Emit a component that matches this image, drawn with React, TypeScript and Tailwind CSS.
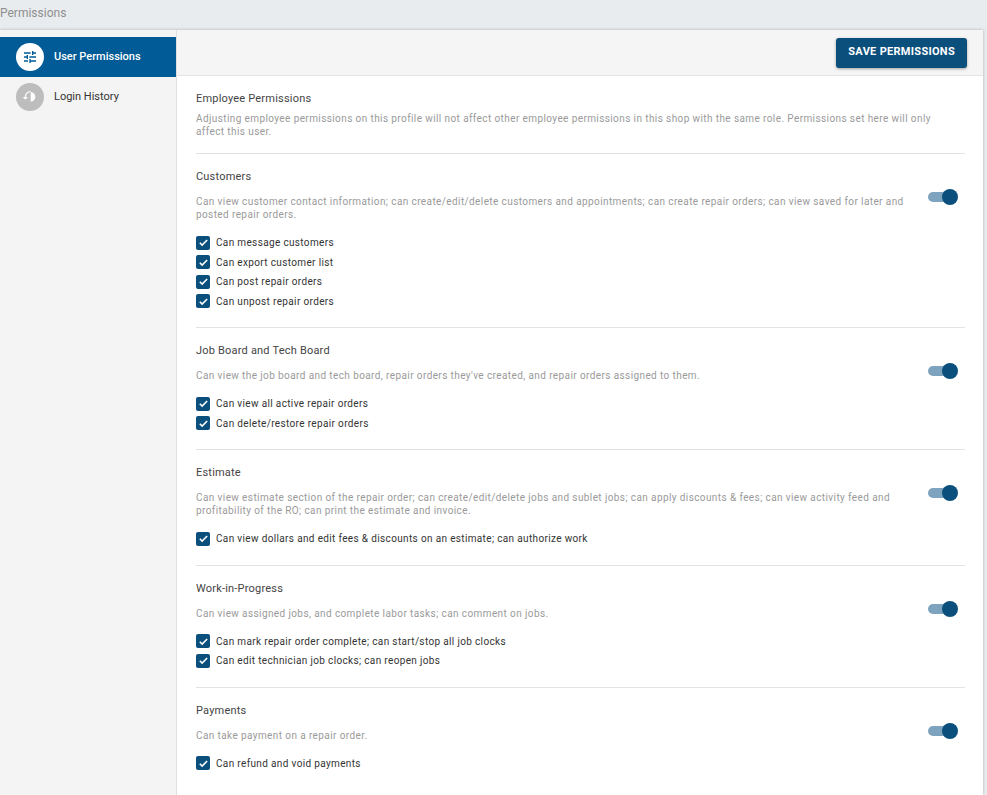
import React from "react";

const Check = ({ label }: { label: string }) => (
  <div className="flex items-center h-[19.5px]">
    <div className="w-[14px] h-[14px] rounded-[2px] bg-[#0b4f7c] flex items-center justify-center">
      <svg width="11" height="11" viewBox="0 0 24 24" fill="none" stroke="white" strokeWidth="3.5"><path d="M4 12.5l5 5L20 6.5" /></svg>
    </div>
    <span className="ml-[6px] text-[10px] text-[#333] tracking-[0.35px]">{label}</span>
  </div>
);

const Toggle = () => (
  <div className="relative w-[30px] h-[16px] shrink-0 mr-[7px]">
    <div className="absolute left-0 top-[3px] w-[26px] h-[10px] rounded-full bg-[#7ea3be]" />
    <div className="absolute right-0 top-0 w-[16px] h-[16px] rounded-full bg-[#0b4f7c]" />
  </div>
);

const Section = ({ title, desc, checks, last }: { title: string; desc: string; checks: string[]; last?: boolean }) => (
  <div className={`pt-[16px] ${last ? "" : "border-b border-[#e3e3e3] pb-[16px]"}`}>
    <div className="text-[11px] text-[#444] leading-[14px] tracking-[0.2px]">{title}</div>
    <div className="flex items-start mt-[11px]">
      <div className="flex-1 text-[10px] text-[#9a9a9a] leading-[13px] pr-[10px] tracking-[0.4px]">{desc}</div>
      <div className="-mt-[6px]"><Toggle /></div>
    </div>
    <div className="mt-[12px]">
      {checks.map((c) => <Check key={c} label={c} />)}
    </div>
  </div>
);

export default function App() {
  return (
    <div className="w-[987px] h-[795px] bg-[#e9ecef] flex flex-col overflow-hidden" style={{ fontFamily: "Roboto, sans-serif" }}>
      <div className="h-[30px] flex items-center text-[12px] text-[#8e8e8e] px-0 pb-[4px]">Permissions</div>
      <div className="flex flex-1 min-h-0 mr-[4px] shadow-[0_0_3px_rgba(0,0,0,0.25)]">
        <div className="w-[176px] bg-[#f4f4f4] pt-[7px]">
          <div className="h-[40px] bg-[#005b96] flex items-center pl-[16px]">
            <div className="w-[28px] h-[28px] rounded-full bg-white flex items-center justify-center">
              <svg width="16" height="16" viewBox="0 0 24 24" fill="#005b96"><path d="M3 17v2h6v-2H3zM3 5v2h10V5H3zm10 16v-2h8v-2h-8v-2h-2v6h2zM7 9v2H3v2h4v2h2V9H7zm14 4v-2H11v2h10zm-6-4h2V7h4V5h-4V3h-2v6z"/></svg>
            </div>
            <span className="ml-[10px] text-[11px] text-white font-medium">User Permissions</span>
          </div>
          <div className="h-[40px] flex items-center pl-[16px]">
            <div className="w-[28px] h-[28px] rounded-full bg-[#bdbdbd] flex items-center justify-center">
              <svg width="16" height="16" viewBox="0 0 24 24" fill="white"><path d="M13 3a9 9 0 0 0-9 9H1l3.89 3.89.07.14L9 12H6c0-3.87 3.13-7 7-7s7 3.13 7 7-3.13 7-7 7c-1.930-3.68-.79-4.94-2.06l-1.42 1.42A8.954 8.954 0 0 0 13 21a9 9 0 0 0 0-18zm-1 5v5l4.28 2.54.72-1.21-3.5-2.08V8H12z"/></svg>
            </div>
            <span className="ml-[10px] text-[11px] text-[#333]">Login History</span>
          </div>
        </div>
        <div className="flex-1 bg-white flex flex-col border-l border-[#e0e0e0]">
          <div className="h-[46px] bg-[#f5f5f5] border-b border-[#e3e3e3] flex items-center justify-end pr-[16px]">
            <button className="h-[30px] px-[12px] rounded-[3px] bg-[#0b4f7c] text-white text-[11px] font-bold tracking-[0.3px] shadow-[0_1px_3px_rgba(0,0,0,0.35)]">SAVE PERMISSIONS</button>
          </div>
          <div className="pl-[19px] pr-[18px] overflow-hidden">
            <div className="pt-[16px] pb-[15px] border-b border-[#e3e3e3]">
              <div className="text-[11px] text-[#444] leading-[14px] tracking-[0.2px]">Employee Permissions</div>
              <div className="mt-[6px] text-[10px] text-[#9a9a9a] leading-[13px] tracking-[0.4px] pr-[10px]">Adjusting employee permissions on this profile will not affect other employee permissions in this shop with the same role. Permissions set here will only affect this user.</div>
            </div>
            <Section title="Customers" desc="Can view customer contact information; can create/edit/delete customers and appointments; can create repair orders; can view saved for later and posted repair orders." checks={["Can message customers", "Can export customer list", "Can post repair orders", "Can unpost repair orders"]} />
            <Section title="Job Board and Tech Board" desc="Can view the job board and tech board, repair orders they've created, and repair orders assigned to them." checks={["Can view all active repair orders", "Can delete/restore repair orders"]} />
            <Section title="Estimate" desc="Can view estimate section of the repair order; can create/edit/delete jobs and sublet jobs; can apply discounts & fees; can view activity feed and profitability of the RO; can print the estimate and invoice." checks={["Can view dollars and edit fees & discounts on an estimate; can authorize work"]} />
            <Section title="Work-in-Progress" desc="Can view assigned jobs, and complete labor tasks; can comment on jobs." checks={["Can mark repair order complete; can start/stop all job clocks", "Can edit technician job clocks; can reopen jobs"]} />
            <Section title="Payments" desc="Can take payment on a repair order." checks={["Can refund and void payments"]} last />
          </div>
        </div>
      </div>
    </div>
  );
}
